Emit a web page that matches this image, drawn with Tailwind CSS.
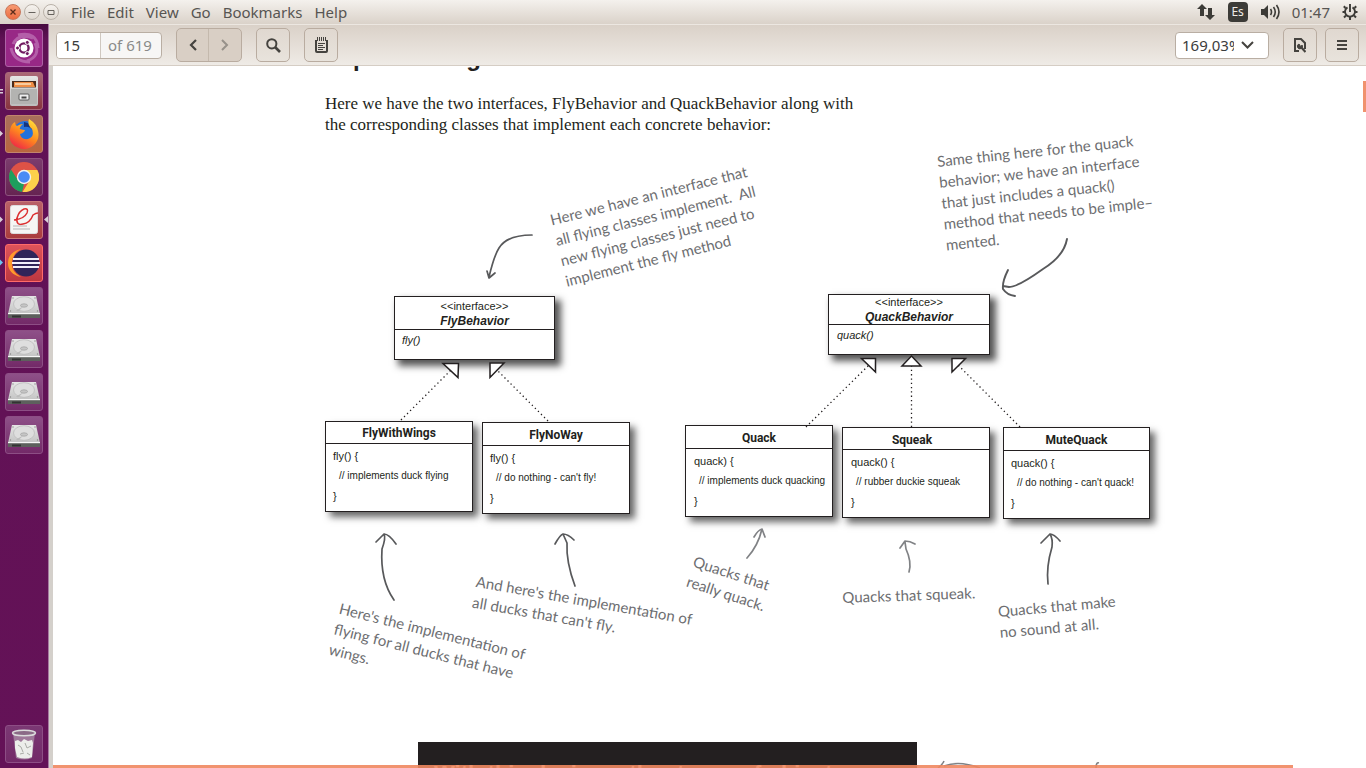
<!DOCTYPE html>
<html lang="en">
<head>
<meta charset="utf-8">
<title>Document Viewer</title>
<script src="https://cdn.jsdelivr.net/npm/@tailwindcss/browser@4"></script>
</head>
<body class="h-screen flex flex-col overflow-hidden bg-white font-['Noto_Sans',sans-serif]">

<svg class="absolute size-0" aria-hidden="true">
  <defs>
    <linearGradient id="metal" x1="0" y1="0" x2="0" y2="1"><stop offset="0" stop-color="#e6e6e6"/><stop offset="1" stop-color="#bdbdbd"/></linearGradient>
    <linearGradient id="fox" x1="0.8" y1="0" x2="0.2" y2="1"><stop offset="0" stop-color="#ffe03a"/><stop offset="0.5" stop-color="#ff8a1e"/><stop offset="1" stop-color="#ee2049"/></linearGradient>
    <symbol id="disk" viewBox="0 0 32 26">
      <path d="M4 1h24l4 18v3H0v-3z" fill="url(#metal)"/>
      <path d="M0 18.500h32v4.500H0z" fill="#5d605d"/><path d="M0 18h32v1.200H0z" fill="#f6f6f6"/>
      <path d="M4 20.500h9v2H4z" fill="#333"/>
      <ellipse cx="16" cy="9" rx="10.500" ry="7.300" fill="#dedede" stroke="#bbb" stroke-width=".8"/>
      <ellipse cx="16" cy="10.500" rx="3.500" ry="1.700" fill="#c5c5c5" stroke="#999" stroke-width=".6"/>
      <path d="M16 11l-8 4.500 2 1z" fill="#bbb"/>
      <circle cx="5" cy="3" r=".7" fill="#888"/><circle cx="27" cy="3" r=".7" fill="#888"/><circle cx="2.500" cy="16" r=".7" fill="#888"/><circle cx="29.500" cy="16" r=".7" fill="#888"/>
    </symbol>
  </defs>
</svg>

<!-- Global menu bar -->
<header class="h-6 shrink-0 flex items-center justify-between bg-linear-to-b from-[#f4f1ed] to-[#dad2c9] pl-[5px] pr-2 text-[15px] leading-6 text-[#575552]">
  <div class="flex items-center">
    <div class="flex gap-[3px]">
      <button aria-label="Close" class="size-4 rounded-full border border-[#c9765a] bg-linear-to-b from-[#f79a72] to-[#ec6c41] flex items-center justify-center"><svg class="size-2" viewBox="0 0 8 8" stroke="#5b2c1b" stroke-width="1.300"><path d="M1.500 1.500l5 5M6.500 1.500l-5 5"/></svg></button>
      <button aria-label="Minimize" class="size-4 rounded-full border border-[#b9b1a8] bg-linear-to-b from-[#f6f3ef] to-[#dfd8d0] flex items-center justify-center"><svg class="size-2" viewBox="0 0 8 8" stroke="#66625d"><path d="M0.500 4.500h7"/></svg></button>
      <button aria-label="Maximize" class="size-4 rounded-full border border-[#b9b1a8] bg-linear-to-b from-[#f6f3ef] to-[#dfd8d0] flex items-center justify-center"><svg class="size-2" viewBox="0 0 8 8" stroke="#66625d" fill="none"><path d="M1 2.500h6v4H1z"/></svg></button>
    </div>
    <nav class="flex gap-3 ml-3">
      <button>File</button><button>Edit</button><button>View</button><button>Go</button><button>Bookmarks</button><button>Help</button>
    </nav>
  </div>
  <div class="flex items-center">
    <svg class="w-[18px] h-4 mr-[13px]" viewBox="0 0 18 16" fill="#3c3b37"><path d="M5 0l5 5H7v7H3V5H0zM13 16l5-5h-3V4h-4v7H8z"/></svg>
    <span class="w-5 h-5 rounded-sm bg-[#3c3b37] text-[#efebe5] text-xs leading-5 text-center mr-3">Es</span>
    <svg class="w-5 h-4 mr-3" viewBox="0 0 20 16" fill="none" stroke="#3c3b37" stroke-width="1.600"><path d="M1 5h3l4-4v14l-4-4H1z" fill="#3c3b37" stroke="none"/><path d="M10.500 5q2 3 0 6M13.500 3q3.500 5 0 10M16.500 1q5 7 0 14"/></svg>
    <time class="mr-3">01:47</time>
    <svg class="size-4" viewBox="0 0 16 16" fill="none" stroke="#3c3b37"><path d="M5.500 3.400a5 5 0 1 0 5 0" stroke-width="1.900"/><path d="M8 0v8" stroke-width="1.900"/><path d="M3.500 4L1.800 2.300M12.500 4l1.700-1.700M3 8H0.500M13 8h2.500M4 11.500l-2 2M12 11.500l2 2M8 13v3" stroke-width="2"/></svg>
  </div>
</header>

<div class="flex-1 min-h-0 flex">
  <!-- Launcher -->
  <aside class="relative w-[49px] shrink-0 flex flex-col justify-between bg-linear-to-b from-[#460a3f] via-[#601155] via-[2%] to-[#641257] border-r border-[#a67aa0] pl-[5px] pt-[5px] pb-[5px]">
    <div class="flex flex-col gap-[5px]">
      <button aria-label="Dash" class="size-[38px] rounded-[3px] border border-[#ad62a5] bg-[#982886] flex items-center justify-center overflow-hidden">
        <svg class="size-9" viewBox="0 0 36 36" fill="none"><path d="M7 14Q12 3 27 8M29 13Q35 26 21 31M5 18Q8 32 24 32M12 5Q31 1 32 18" stroke="#b45fa9" stroke-width="3"/><circle cx="18" cy="18" r="9.500" fill="#fff"/><circle cx="18" cy="18" r="4.600" stroke="#701a60" stroke-width="2.400"/><g fill="#701a60" stroke="#fff"><circle cx="11.500" cy="18" r="2"/><circle cx="21.300" cy="12.400" r="2"/><circle cx="21.300" cy="23.600" r="2"/></g></svg>
      </button>
      <button aria-label="Files" class="size-[38px] rounded-[3px] border border-[#a9687a] bg-linear-to-b from-[#aa6877] to-[#87343f] flex items-center justify-center">
        <svg class="w-7 h-[30px]" viewBox="0 0 28 30"><rect width="28" height="30" rx="2" fill="url(#metal)"/><rect x="2" y="5" width="24" height="7" fill="#4b2b1b"/><path d="M4 6h19l2 5H4z" fill="#ef8d45"/><path d="M5 8h16" stroke="#fbe0bc" stroke-width="1.500"/><path d="M1 12h26v16H1z" fill="#b3b3b1"/><path d="M1 12h26" stroke="#eee"/><rect x="9" y="18" width="10" height="6" rx="1" fill="#eee" stroke="#5b5b5b"/><path d="M11.500 21.500h5" stroke="#444" stroke-width="2"/></svg>
      </button>
      <button aria-label="Firefox" class="size-[38px] rounded-[3px] border border-[#c2856c] bg-linear-to-b from-[#a86f5c] to-[#b9663e] flex items-center justify-center">
        <svg class="size-[30px]" viewBox="0 0 30 30"><circle cx="16" cy="14" r="12" fill="#2472dc"/><path d="M15 3q8 1 9 9-3-5-9-4z" fill="#15357f"/><path d="M1 11Q2 5 6 3q0 3 2 4 3-2 6-2-4 3-3 5 3 1 5 1-1 3-5 4 1 6 8 5 7-2 4-10Q18 6 20 0q8 5 9 12 2 8-4 14-7 6-15 3Q-2 25 1 11z" fill="url(#fox)"/></svg>
      </button>
      <button aria-label="Chrome" class="size-[38px] rounded-[3px] border border-[#8d527f] bg-linear-to-b from-[#7b3c6d] to-[#662452] flex items-center justify-center">
        <svg class="size-[30px]" viewBox="0 0 30 30"><circle cx="15" cy="15" r="15" fill="#de5246"/><path d="M2 7.500L9.500 19 15 22l-2 7.900A15 15 0 0 1 2 7.500z" fill="#1d9f5d"/><path d="M15 8h13.300A15 15 0 0 1 13.500 30L21 18z" fill="#fdd14b"/><circle cx="15" cy="15" r="7.200" fill="#f4f4f4"/><circle cx="15" cy="15" r="5.800" fill="#4a8bf5"/></svg>
      </button>
      <button aria-label="Document Viewer" class="size-[38px] rounded-[3px] border border-[#c9777a] bg-linear-to-b from-[#b96168] to-[#aa3c3d] flex items-center justify-center">
        <svg class="w-7 h-[30px]" viewBox="0 0 28 30" fill="none"><rect x=".5" y=".5" width="27" height="28" rx="2" fill="#f6f6f4" stroke="#ddd"/><path d="M4 15q10-1 13-7 2-5-3-4-5 2-7 9-1 8 6 6 7-1 10-9 3-2 5-2" stroke="#dc3030" stroke-width="1.500"/><path d="M3 21h14M3 24h17" stroke="#ccc" stroke-width="1.500"/></svg>
      </button>
      <button aria-label="Eclipse" class="size-[38px] rounded-[3px] border border-[#ff6b69] bg-linear-to-b from-[#df535a] to-[#bd3740] flex items-center justify-center">
        <svg class="w-8 h-[30px]" viewBox="0 0 32 30"><path d="M13 1Q0 4 0 15t13 14Q3 24 4 14 5 5 13 1z" fill="#ff9a2c"/><circle cx="18" cy="15" r="13.500" fill="#302459"/><path d="M5 11h26M4 15h28M5 19h26" stroke="#f2effa" stroke-width="2"/></svg>
      </button>
      <button aria-label="Volume 1" class="size-[38px] rounded-[3px] border border-[#8d4e85] bg-linear-to-b from-[#8e5088] to-[#732a68] flex items-end justify-center pb-[3px]"><svg class="w-8 h-[26px]"><use href="#disk"/></svg></button>
      <button aria-label="Volume 2" class="size-[38px] rounded-[3px] border border-[#8d4e85] bg-linear-to-b from-[#8e5088] to-[#732a68] flex items-end justify-center pb-[3px]"><svg class="w-8 h-[26px]"><use href="#disk"/></svg></button>
      <button aria-label="Volume 3" class="size-[38px] rounded-[3px] border border-[#8d4e85] bg-linear-to-b from-[#8e5088] to-[#732a68] flex items-end justify-center pb-[3px]"><svg class="w-8 h-[26px]"><use href="#disk"/></svg></button>
      <button aria-label="Volume 4" class="size-[38px] rounded-[3px] border border-[#8d4e85] bg-linear-to-b from-[#8e5088] to-[#732a68] flex items-end justify-center pb-[3px]"><svg class="w-8 h-[26px]"><use href="#disk"/></svg></button>
    </div>
    <button aria-label="Trash" class="size-[38px] rounded-[3px] border border-[#8d4e85] bg-linear-to-b from-[#7b3874] to-[#732a68] flex items-center justify-center">
      <svg class="w-[26px] h-[31px]" viewBox="0 0 26 31"><path d="M2 4l3 25q8 3 16 0l3-25z" fill="#a98ba5" opacity=".8"/><path d="M4 12l3-1 3 2 3-3 4 2 4-1 1 3-1 14q-7 3-15 0L4 19z" fill="#eceeea"/><path d="M7 16l3 2 2 5M14 14l2 5 4-2M9 25l4-1M16 24l3 2" stroke="#a9aca6" fill="none"/><ellipse cx="13" cy="4" rx="11.500" ry="2.800" fill="#8b6a87" stroke="#dcdcdc" stroke-width="1.500"/></svg>
    </button>
    <!-- Running and focus marks -->
    <svg class="absolute left-0 top-0 w-12 h-[260px]" viewBox="0 24 48 260" fill="#d9cfd8"><path d="M0 89h3v1.500H0zM0 92h3v1.500H0zM0 130.500l3 3-3 3zM0 216.500l3 3-3 3zM48 216l-4 3.500 4 3.500z"/><path d="M0 259.500l3 3-3 3z" fill="#6cc5f0"/></svg>
  </aside>

  <div class="flex-1 min-w-0 flex flex-col">
    <!-- Toolbar -->
    <div class="h-[42px] shrink-0 flex items-center justify-between bg-linear-to-b from-[#dad1c8] to-[#efebe6] border-t border-t-[#ece7e1] border-b border-b-[#d5cdc4] pl-[7px] pr-[7px] text-[15px]">
      <div class="flex items-center">
        <div class="flex h-[27px] w-[106px] rounded-[4px] border border-[#b9aea3] bg-[#f7f6f5] overflow-hidden">
          <input aria-label="Page" value="15" class="w-[44px] bg-white pl-1.5 text-[#3c3c3c] border-r border-[#cfc8c0]">
          <span class="pl-[7px] leading-[25px] text-[#8a8a88]">of 619</span>
        </div>
        <div class="flex h-[34px] ml-[14px] rounded-[5px] border border-[#b9aca0] bg-[#d9cfc5]">
          <button aria-label="Previous page" class="w-8 flex items-center justify-center border-r border-[#c4b9ad]"><svg class="w-2 h-3" viewBox="0 0 8 12" fill="none" stroke="#45433f" stroke-width="2.200"><path d="M7 1L2 6l5 5"/></svg></button>
          <button aria-label="Next page" class="w-8 flex items-center justify-center"><svg class="w-2 h-3" viewBox="0 0 8 12" fill="none" stroke="#97918a" stroke-width="2"><path d="M1 1l5 5-5 5"/></svg></button>
        </div>
        <button aria-label="Find" class="w-[34px] h-[34px] ml-[14px] rounded-[5px] border border-[#b9aca0] bg-linear-to-b from-[#e0d8d0] to-[#e8e3dc] flex items-center justify-center"><svg class="size-[15px]" viewBox="0 0 15 15" fill="none" stroke="#45433f"><circle cx="5.800" cy="5.800" r="4.600" stroke-width="2"/><path d="M9 9l5 5" stroke-width="2.600"/></svg></button>
        <button aria-label="Annotations" class="w-[34px] h-[34px] ml-[14px] rounded-[5px] border border-[#b9aca0] bg-linear-to-b from-[#e0d8d0] to-[#e8e3dc] flex items-center justify-center"><svg class="w-[13px] h-4" viewBox="0 0 13 16" fill="none" stroke="#45433f"><path d="M1 3v11q0 1 1 1h9q1 0 1-1V3" stroke-width="2"/><path d="M2.500 0v4M4.500 0v4M6.500 0v4M8.500 0v4M10.500 0v4"/><path d="M3 6.500h7M3 8.500h5M3 10.500h7M3 12.500h5"/></svg></button>
      </div>
      <div class="flex items-center">
        <label class="relative flex items-center h-[27px] w-[94px] rounded-[4px] border border-[#b9aea3] bg-white">
          <input aria-label="Zoom" value="169,03%" class="w-[58px] pl-[6px] bg-transparent text-[#3c3c3c] leading-[25px]">
          <svg class="w-[13px] h-2 ml-[7px]" viewBox="0 0 13 8" fill="none" stroke="#45433f" stroke-width="2"><path d="M1 1l5.500 5.500L12 1"/></svg>
        </label>
        <button aria-label="Document properties" class="w-[34px] h-[34px] ml-[14px] rounded-[5px] border border-[#b9aca0] bg-linear-to-b from-[#e0d8d0] to-[#e8e3dc] flex items-center justify-center"><svg class="w-3 h-4" viewBox="0 0 12 16" fill="none" stroke="#45433f"><path d="M5 14H1V2h6l4 4v6" stroke-width="2"/><path d="M5 7a2.500 2.500 0 1 0 3 1L7 10z" fill="#45433f"/><path d="M7 10l4.500 5" stroke-width="2.200"/></svg></button>
        <button aria-label="Menu" class="w-[34px] h-[34px] ml-2 rounded-[5px] border border-[#b9aca0] bg-linear-to-b from-[#e0d8d0] to-[#e8e3dc] flex items-center justify-center"><svg class="w-[10px] h-[10px]" viewBox="0 0 10 10" stroke="#45433f" stroke-width="2"><path d="M0 1h10M0 5h10M0 9h10"/></svg></button>
      </div>
    </div>

    <!-- Page canvas -->
    <main class="relative flex-1 min-h-0 overflow-hidden bg-white border-l-4 border-[#d4d0cb] text-[#231f20]">
      <h1 class="absolute left-[272px] -top-[22px] text-[24px] leading-7 font-bold font-['Liberation_Sans',sans-serif] whitespace-nowrap">Implementing the Duck Behaviors</h1>
      <p class="absolute left-[272px] top-[27px] text-[17px] leading-[21px] font-['Liberation_Serif',serif] whitespace-nowrap">Here we have the two interfaces, FlyBehavior and QuackBehavior along with<br>the corresponding classes that implement each concrete behavior:</p>

      <div class="text-[11px] leading-5 font-['Liberation_Sans',sans-serif] whitespace-nowrap">
        <section class="absolute left-[341px] top-[230px] w-[161px] h-[64px] bg-white border border-[#231f20] shadow-[5px_5px_7px_1px_#555]">
          <div class="h-[33px] pt-[2px] border-b border-[#231f20] text-center leading-[15px]">&lt;&lt;interface&gt;&gt;<h2 class="text-[12px] font-bold italic">FlyBehavior</h2></div>
          <p class="pl-[7px] italic">fly()</p>
        </section>
        <section class="absolute left-[775px] top-[228px] w-[162px] h-[61px] bg-white border border-[#231f20] shadow-[5px_5px_7px_1px_#555]">
          <div class="h-[30px] border-b border-[#231f20] text-center leading-[15px]">&lt;&lt;interface&gt;&gt;<h2 class="text-[12px] font-bold italic">QuackBehavior</h2></div>
          <p class="pl-[8px] italic">quack()</p>
        </section>
        <section class="absolute left-[272px] top-[355px] w-[148px] h-[91px] bg-white border border-[#231f20] shadow-[5px_5px_7px_0px_#666]">
          <h2 class="h-[22px] border-b border-[#231f20] text-center text-[12px] leading-[23px] font-bold font-['Roboto',sans-serif]">FlyWithWings</h2>
          <p class="pl-[7px] pt-[2px]">fly() {</p><p class="pl-[13px] text-[10px] leading-5">// implements duck flying</p><p class="pl-[7px]">}</p>
        </section>
        <section class="absolute left-[429px] top-[356px] w-[148px] h-[92px] bg-white border border-[#231f20] shadow-[5px_5px_7px_0px_#666]">
          <h2 class="h-[23px] border-b border-[#231f20] text-center text-[12px] leading-[24px] font-bold font-['Roboto',sans-serif]">FlyNoWay</h2>
          <p class="pl-[7px] pt-[2px]">fly() {</p><p class="pl-[13px] text-[10px] leading-5">// do nothing - can't fly!</p><p class="pl-[7px]">}</p>
        </section>
        <section class="absolute left-[632px] top-[359px] w-[148px] h-[92px] bg-white border border-[#231f20] shadow-[5px_5px_7px_0px_#666]">
          <h2 class="h-[23px] border-b border-[#231f20] text-center text-[12px] leading-[24px] font-bold font-['Roboto',sans-serif]">Quack</h2>
          <p class="pl-[8px] pt-[2px]">quack) {</p><p class="pl-[13px] text-[10px] leading-5">// implements duck quacking</p><p class="pl-[8px]">}</p>
        </section>
        <section class="absolute left-[789px] top-[361px] w-[148px] h-[91px] bg-white border border-[#231f20] shadow-[5px_5px_7px_0px_#666]">
          <h2 class="h-[22px] border-b border-[#231f20] text-center text-[12px] leading-[24px] font-bold font-['Roboto',sans-serif] pr-2">Squeak</h2>
          <p class="pl-[8px] pt-[2px]">quack() {</p><p class="pl-[13px] text-[10px] leading-5">// rubber duckie squeak</p><p class="pl-[8px]">}</p>
        </section>
        <section class="absolute left-[950px] top-[361px] w-[147px] h-[92px] bg-white border border-[#231f20] shadow-[5px_5px_7px_0px_#666]">
          <h2 class="h-[23px] border-b border-[#231f20] text-center text-[12px] leading-[24px] font-bold font-['Roboto',sans-serif]">MuteQuack</h2>
          <p class="pl-[7px] pt-[2px]">quack() {</p><p class="pl-[13px] text-[10px] leading-5">// do nothing - can't quack!</p><p class="pl-[7px]">}</p>
        </section>
      </div>

      <!-- Connectors and hand-drawn arrows -->
      <svg class="absolute left-0 top-0 w-[1313px] h-[702px]" viewBox="53 66 1313 702" fill="none">
        <g stroke="#231f20" stroke-width="1.300" stroke-dasharray="1.300 3"><path d="M401 420L452 369M548 421L495 368M806 427L870 364M911.500 427V366M1020 427L957 364"/></g>
        <g fill="#fff" stroke="#231f20" stroke-width="1.500"><path d="M443 363.500h15.500l-.5 14zM490 363h14l-14 14.500zM861.500 358.500h14v13.500zM902 366h19l-9.500-10zM952 358.500h13.500L952 372z"/></g>
        <g stroke="#58595b" stroke-width="1.700" stroke-linecap="round" stroke-linejoin="round">
          <path d="M532 235Q507 235 499 248Q494 256 489 277M487 271l2 7 6-5"/>
          <path d="M1067 239Q1064 256 1043 269Q1018 287 1009 287L1003 286M1008 270Q1002 282 1003 289Q1007 295 1015 296" stroke-width="1.900"/>
          <path d="M394 600Q380 580 382 549Q386 538 384 534M376 542l8-8q5 0 12 10"/>
          <path d="M575 586Q566 562 567 543L563 534M555 544Q560 535 563 534q5 0 11 6"/>
          <path d="M747 558Q758 546 762 529M754 537Q758 530 762 529l3 8" stroke="#808285"/>
          <path d="M909 572Q912 562 906 549L905 542M900 548l5-7q5 0 10 3" stroke="#808285"/>
          <path d="M1048 584Q1046 567 1052 547Q1053 539 1050 534M1041 543l9-9q4 0 10 7"/>
        </g>
        <g stroke="#808285" stroke-width="1.500"><path d="M938 768Q943 764 944 761M944 766q15-6 36 2M1096 768q0-6 3-5"/></g>
      </svg>

      <div class="text-[15px] leading-[21px] text-[#6d6e71] font-['Lato',sans-serif] whitespace-nowrap">
        <p class="absolute left-[495px] top-[144px] origin-top-left -rotate-14">Here we have an interface that<br>all flying classes implement.&nbsp; All<br>new flying classes just need to<br>implement the fly method</p>
        <p class="absolute left-[883px] top-[85px] origin-top-left -rotate-6">Same thing here for the quack<br>behavior; we have an interface<br>that just includes a quack()<br>method that needs to be imple–<br>mented.</p>
        <p class="absolute left-[289px] top-[532px] origin-top-left rotate-14">Here's the implementation of<br>flying for all ducks that have<br>wings.</p>
        <p class="absolute left-[425px] top-[505px] origin-top-left rotate-10">And here's the implementation of<br>all ducks that can't fly.</p>
        <p class="absolute left-[644px] top-[485px] origin-top-left rotate-18">Quacks that<br>really quack.</p>
        <p class="absolute left-[789px] top-[521px] origin-top-left -rotate-2">Quacks that squeak.</p>
        <p class="absolute left-[944px] top-[535px] origin-top-left -rotate-5">Quacks that make<br>no sound at all.</p>
      </div>

      <div class="absolute left-[365px] top-[676px] w-[499px] h-10 bg-[#231f20] pl-4 pt-[18px] text-white text-[22px] leading-7 font-bold font-['Liberation_Sans',sans-serif] whitespace-nowrap">With this design, other types of objects</div>
      <div class="absolute left-0 bottom-0 w-[1240px] h-[3px] bg-[#f0875f]/90"></div>
      <div class="absolute right-0 top-[15px] w-[3px] h-[31px] bg-[#f0926e]"></div>
    </main>
  </div>
</div>
</body>
</html>
